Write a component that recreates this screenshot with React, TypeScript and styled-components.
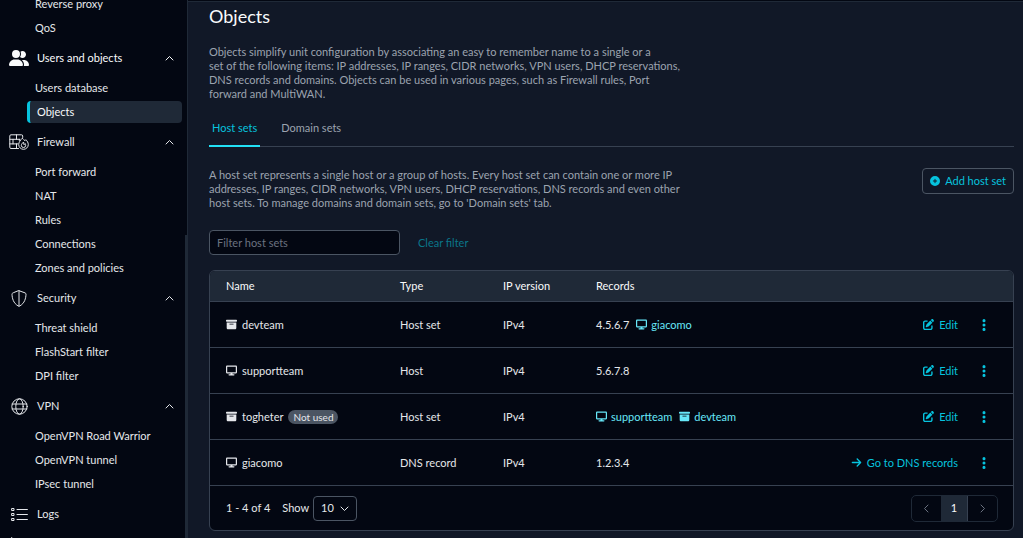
import React from "react";
import styled, { createGlobalStyle } from "styled-components";
import {
  FaArrowRight,
  FaBoxArchive,
  FaCirclePlus,
  FaDisplay,
  FaEllipsisVertical,
  FaPenToSquare,
  FaUserGroup,
} from "react-icons/fa6";

const c = {
  black: "#030712",
  page: "#111827",
  raised: "#1f2937",
  line: "#374151",
  lineStrong: "#4b5563",
  muted: "#9ca3af",
  text: "#e5e7eb",
  bright: "#f9fafb",
  accent: "#06c3de",
  accentLight: "#67e8f9",
  accentDim: "#0a768a",
};

const GlobalStyle = createGlobalStyle`
  *, *::before, *::after { box-sizing: border-box; }
  body {
    margin: 0;
    background: ${c.page};
    color: ${c.text};
    font: 11px/14px Lato, "Open Sans", sans-serif;
    -webkit-font-smoothing: antialiased;
  }
  h1, p, ul { margin: 0; padding: 0; }
  ul { list-style: none; }
  a { color: inherit; text-decoration: none; }
  button, input, select { font: inherit; color: inherit; margin: 0; }
  button { background: none; border: 0; padding: 0; cursor: pointer; }
  svg { display: block; flex: none; }
`;

const Shell = styled.div`
  display: grid;
  grid-template-columns: 188px minmax(0, 1fr);
  height: 100vh;
  overflow: hidden;
`;

const Sidebar = styled.nav`
  display: flex;
  justify-content: space-between;
  background: ${c.black};
  border-right: 1px solid ${c.raised};
  overflow: hidden;
`;

const MenuList = styled.ul`
  flex: 1;
  margin-top: -8px;
  padding-right: 3px;
`;

const ScrollThumb = styled.div`
  width: 2px;
  margin-top: 235px;
  background: ${c.raised};
`;

const GroupToggle = styled.button<{ $open?: boolean }>`
  display: grid;
  grid-template-columns: 20px 1fr 9px;
  align-items: center;
  gap: 8px;
  width: 100%;
  height: 36px;
  padding: 0 8px 0 9px;
  text-align: left;
  color: ${(p) => (p.$open ? c.bright : c.text)};
`;

const IconSlot = styled.span`
  display: flex;
  justify-content: center;
`;

const SubItem = styled.li`
  padding: 1px 0 1px 27px;
`;

const SubLink = styled.a<{ $active?: boolean }>`
  display: flex;
  align-items: center;
  height: 22px;
  padding-left: ${(p) => (p.$active ? 7 : 5)}px;
  border-left: 3px solid ${(p) => (p.$active ? c.accent : "transparent")};
  border-radius: 4px;
  background: ${(p) => (p.$active ? c.raised : "transparent")};
  color: ${(p) => (p.$active ? c.bright : c.text)};
`;

const Main = styled.main`
  border-top: 1px solid ${c.black};
  overflow: hidden;
`;

const Content = styled.div`
  border-top: 1px solid ${c.raised};
  padding: 1px 9px 7px 21px;
`;

const Title = styled.h1`
  font-size: 18px;
  line-height: 26px;
  font-weight: 400;
  color: ${c.bright};
`;

const Paragraph = styled.p`
  color: ${c.muted};
  white-space: nowrap;
`;

const Intro = styled(Paragraph)`
  margin-top: 16px;
`;

const Tabs = styled.div`
  display: flex;
  gap: 18px;
  margin-top: 19px;
  box-shadow: inset 0 -1px ${c.line};
`;

const Tab = styled.button<{ $active?: boolean }>`
  padding: 0 3px 9px;
  line-height: 16px;
  color: ${(p) => (p.$active ? c.accent : c.muted)};
  border-bottom: 2px solid ${(p) => (p.$active ? "#22e0f5" : "transparent")};
`;

const SectionHead = styled.div`
  display: flex;
  justify-content: space-between;
  align-items: flex-start;
  margin-top: 21px;
`;

const AddButton = styled.button`
  display: flex;
  align-items: center;
  gap: 5px;
  height: 26px;
  padding: 0 7px;
  border: 1px solid ${c.lineStrong};
  border-radius: 4px;
  color: ${c.accent};
`;

const FilterBar = styled.div`
  display: flex;
  align-items: center;
  gap: 18px;
  margin-top: 20px;
`;

const FilterInput = styled.input`
  width: 191px;
  height: 25px;
  padding: 0 7px;
  border: 1px solid ${c.lineStrong};
  border-radius: 4px;
  background: ${c.black};
  &::placeholder { color: #6b7280; opacity: 1; }
`;

const ClearButton = styled.button`
  color: ${c.accentDim};
`;

const Card = styled.section`
  margin-top: 15px;
  border: 1px solid ${c.line};
  border-radius: 6px;
  background: ${c.black};
  overflow: hidden;
`;

const Table = styled.table`
  width: 100%;
  table-layout: fixed;
  border-spacing: 0;
`;

const HeadCell = styled.th<{ $width?: number }>`
  width: ${(p) => (p.$width ? `${p.$width}px` : "auto")};
  height: 31px;
  padding: 0 0 0 16px;
  background: ${c.raised};
  border-bottom: 1px solid ${c.line};
  color: ${c.bright};
  font-weight: 400;
  text-align: left;
`;

const Cell = styled.td`
  height: 46px;
  padding: 0 0 0 16px;
  border-bottom: 1px solid ${c.line};
`;

const Inline = styled.div<{ $gap: number; $end?: boolean }>`
  display: flex;
  align-items: center;
  justify-content: ${(p) => (p.$end ? "flex-end" : "flex-start")};
  gap: ${(p) => p.$gap}px;
`;

const Badge = styled.span`
  padding: 0 5px;
  border-radius: 7px;
  background: ${c.lineStrong};
  color: ${c.text};
  font-size: 10px;
`;

const RecordLink = styled.a`
  display: flex;
  align-items: center;
  gap: 4px;
  color: ${c.accentLight};
`;

const ActionButton = styled.button`
  display: flex;
  align-items: center;
  gap: 5px;
  color: ${c.accent};
`;

const MoreButton = styled.button`
  display: flex;
  justify-content: center;
  width: 20px;
  margin-right: 19px;
  color: ${c.accent};
`;

const Footer = styled.div`
  display: flex;
  align-items: center;
  justify-content: space-between;
  height: 44px;
  padding: 0 15px 0 16px;
`;

const SizeLabel = styled.label`
  display: flex;
  align-items: center;
  gap: 4px;
`;

const SelectBox = styled.span`
  display: grid;
  align-items: center;
  & > * { grid-area: 1 / 1; }
  & > svg { justify-self: end; margin-right: 8px; pointer-events: none; }
`;

const SizeSelect = styled.select`
  appearance: none;
  width: 44px;
  height: 25px;
  padding: 0 7px;
  border: 1px solid ${c.lineStrong};
  border-radius: 4px;
  background: ${c.black};
`;

const Pager = styled.nav`
  display: flex;
  height: 27px;
  border: 1px solid ${c.raised};
  border-radius: 5px;
  overflow: hidden;
`;

const PageButton = styled.button<{ $current?: boolean }>`
  display: flex;
  align-items: center;
  justify-content: center;
  width: ${(p) => (p.$current ? 27 : 29)}px;
  background: ${(p) => (p.$current ? c.raised : "transparent")};
  border-right: ${(p) => (p.$current ? `1px solid ${c.line}` : "0")};
  color: ${(p) => (p.$current ? c.bright : "#6b7280")};
`;

type ChevronDir = "up" | "down" | "left" | "right";
const chevronPath: Record<ChevronDir, string> = {
  up: "M1 6l3.5-3.5L8 6",
  down: "M1 3l3.5 3.5L8 3",
  left: "M6 1L2.5 4.5 6 8",
  right: "M3 1l3.5 3.5L3 8",
};

const Chevron = ({ dir }: { dir: ChevronDir }) => (
  <svg width="9" height="9" viewBox="0 0 9 9" fill="none" stroke="currentColor" strokeWidth="1" strokeLinecap="round" strokeLinejoin="round" aria-hidden>
    <path d={chevronPath[dir]} />
  </svg>
);

const line = {
  fill: "none",
  stroke: "currentColor",
  strokeLinecap: "round" as const,
  strokeLinejoin: "round" as const,
  "aria-hidden": true,
};

const FirewallIcon = () => (
  <svg width="20" height="16" viewBox="0 0 20 16" strokeWidth="1" {...line}>
    <path d="M9.500 14.500H2a1.200 1.200 0 0 1-1.200-1.200V2A1.200 1.200 0 0 1 2 .8h10.500a1.200 1.200 0 0 1 1.200 1.200v1.200M.8 5.300h10M.8 9.900h8M7.500.8v4.500M4 5.300v4.600M10.300 5.300v1.200M7.500 9.900v4.600" />
    <path d="M13.400 4.200c1.100.9 1.800 1.700 2.400 2.600.3-.4.600-.8 1-1.100 1.400 1.300 2.500 3 2.500 4.800a4.800 4.800 0 0 1-9.600 0c0-2.100 1.600-4.400 3.700-6.300z" />
    <path d="M14.300 8.300c-1 1-2 2-2 3a2.200 2.200 0 0 0 4.400 0c0-.6-.2-1.200-.5-1.700l-.9.900z" />
  </svg>
);

const ShieldIcon = () => (
  <svg width="16" height="17" viewBox="0 0 16 17" strokeWidth="1" {...line}>
    <path d="M8 .7l6.100 2.200c.6.200.9.800.9 1.300-.1 3.900-1.300 9.100-6.300 11.800-.4.200-.9.200-1.400 0C2.300 13.300 1.100 8.100 1 4.200c0-.500.3-1.100.9-1.300zM8 .7v15.400" />
  </svg>
);

const GlobeIcon = () => (
  <svg width="17" height="17" viewBox="0 0 17 17" strokeWidth="1" {...line}>
    <circle cx="8.500" cy="8.500" r="7.700" />
    <ellipse cx="8.500" cy="8.500" rx="3.700" ry="7.700" />
    <path d="M1.200 6h14.600M1.200 11h14.600" />
  </svg>
);

const LogsIcon = () => (
  <svg width="17" height="15" viewBox="0 0 17 15" strokeWidth="1" {...line}>
    <path d="M1 1.500h2v2H1zM1 6.500h2v2H1zM1 11.500h2v2H1zM6 2.500h10.400M6 7.500h10.400M6 12.500h10.400" />
  </svg>
);

const ChartIcon = () => (
  <svg width="17" height="26" viewBox="0 0 17 26" strokeWidth="1" {...line}>
    <path d="M.7.500v19a2 2 0 0 0 2 2h13.600M4 14l4-4 3 3 5-5" />
  </svg>
);

type Group = { label: string; icon: React.ReactNode; items?: string[] };

const groups: Group[] = [
  { label: "Users and objects", icon: <FaUserGroup size={20} />, items: ["Users database", "Objects"] },
  { label: "Firewall", icon: <FirewallIcon />, items: ["Port forward", "NAT", "Rules", "Connections", "Zones and policies"] },
  { label: "Security", icon: <ShieldIcon />, items: ["Threat shield", "FlashStart filter", "DPI filter"] },
  { label: "VPN", icon: <GlobeIcon />, items: ["OpenVPN Road Warrior", "OpenVPN tunnel", "IPsec tunnel"] },
  { label: "Logs", icon: <LogsIcon /> },
];

const MenuItem = ({ label }: { label: string }) => (
  <SubItem>
    <SubLink href="#" $active={label === "Objects"} aria-current={label === "Objects" ? "page" : undefined}>
      {label}
    </SubLink>
  </SubItem>
);

type Kind = "set" | "host";
const KindIcon = ({ kind }: { kind: Kind }) => (kind === "set" ? <FaBoxArchive size={11} /> : <FaDisplay size={11} />);

type Row = {
  name: string;
  kind: Kind;
  type: string;
  unused?: boolean;
  address?: string;
  links?: { kind: Kind; name: string }[];
  dns?: boolean;
};

const rows: Row[] = [
  { name: "devteam", kind: "set", type: "Host set", address: "4.5.6.7", links: [{ kind: "host", name: "giacomo" }] },
  { name: "supportteam", kind: "host", type: "Host", address: "5.6.7.8" },
  {
    name: "togheter",
    kind: "set",
    type: "Host set",
    unused: true,
    links: [
      { kind: "host", name: "supportteam" },
      { kind: "set", name: "devteam" },
    ],
  },
  { name: "giacomo", kind: "host", type: "DNS record", address: "1.2.3.4", dns: true },
];

const ObjectRow = ({ row }: { row: Row }) => (
  <tr>
    <Cell>
      <Inline $gap={5}>
        <KindIcon kind={row.kind} />
        {row.name}
        {row.unused && <Badge>Not used</Badge>}
      </Inline>
    </Cell>
    <Cell>{row.type}</Cell>
    <Cell>IPv4</Cell>
    <Cell>
      <Inline $gap={7}>
        {row.address}
        {row.links?.map((l) => (
          <RecordLink href="#" key={l.name}>
            <KindIcon kind={l.kind} />
            {l.name}
          </RecordLink>
        ))}
      </Inline>
    </Cell>
    <Cell>
      <Inline $gap={16} $end>
        <ActionButton>
          {row.dns ? <FaArrowRight size={11} /> : <FaPenToSquare size={11} />}
          {row.dns ? "Go to DNS records" : "Edit"}
        </ActionButton>
        <MoreButton aria-label={`More actions for ${row.name}`}>
          <FaEllipsisVertical size={14} />
        </MoreButton>
      </Inline>
    </Cell>
  </tr>
);

export default function App() {
  return (
    <>
      <GlobalStyle />
      <Shell>
        <Sidebar aria-label="Main menu">
          <MenuList>
            <MenuItem label="Reverse proxy" />
            <MenuItem label="QoS" />
            {groups.map((g) => (
              <li key={g.label}>
                <GroupToggle $open={g.label === "Users and objects"}>
                  <IconSlot>{g.icon}</IconSlot>
                  {g.label}
                  {g.items && <Chevron dir="up" />}
                </GroupToggle>
                {g.items && (
                  <ul>
                    {g.items.map((i) => (
                      <MenuItem label={i} key={i} />
                    ))}
                  </ul>
                )}
              </li>
            ))}
            <li>
              <GroupToggle aria-label="Monitoring">
                <IconSlot>
                  <ChartIcon />
                </IconSlot>
              </GroupToggle>
            </li>
          </MenuList>
          <ScrollThumb />
        </Sidebar>
        <Main>
          <Content>
            <Title>Objects</Title>
            <Intro>
              Objects simplify unit configuration by associating an easy to remember name to a single or a
              <br />
              set of the following items: IP addresses, IP ranges, CIDR networks, VPN users, DHCP reservations,
              <br />
              DNS records and domains. Objects can be used in various pages, such as Firewall rules, Port
              <br />
              forward and MultiWAN.
            </Intro>
            <Tabs role="tablist">
              <Tab role="tab" aria-selected $active>
                Host sets
              </Tab>
              <Tab role="tab" aria-selected={false}>
                Domain sets
              </Tab>
            </Tabs>
            <SectionHead>
              <Paragraph>
                A host set represents a single host or a group of hosts. Every host set can contain one or more IP
                <br />
                addresses, IP ranges, CIDR networks, VPN users, DHCP reservations, DNS records and even other
                <br />
                host sets. To manage domains and domain sets, go to 'Domain sets' tab.
              </Paragraph>
              <AddButton>
                <FaCirclePlus size={10} />
                Add host set
              </AddButton>
            </SectionHead>
            <FilterBar>
              <FilterInput type="text" placeholder="Filter host sets" aria-label="Filter host sets" />
              <ClearButton>Clear filter</ClearButton>
            </FilterBar>
            <Card>
              <Table>
                <thead>
                  <tr>
                    <HeadCell $width={174}>Name</HeadCell>
                    <HeadCell $width={103}>Type</HeadCell>
                    <HeadCell $width={93}>IP version</HeadCell>
                    <HeadCell>Records</HeadCell>
                    <HeadCell aria-label="Actions" />
                  </tr>
                </thead>
                <tbody>
                  {rows.map((r) => (
                    <ObjectRow row={r} key={r.name} />
                  ))}
                </tbody>
              </Table>
              <Footer>
                <Inline $gap={12}>
                  <span>1 - 4 of 4</span>
                  <SizeLabel>
                    Show
                    <SelectBox>
                      <SizeSelect defaultValue="10">
                        <option>10</option>
                        <option>25</option>
                        <option>50</option>
                      </SizeSelect>
                      <Chevron dir="down" />
                    </SelectBox>
                  </SizeLabel>
                </Inline>
                <Pager aria-label="Pagination">
                  <PageButton aria-label="Previous page">
                    <Chevron dir="left" />
                  </PageButton>
                  <PageButton $current aria-current="page">
                    1
                  </PageButton>
                  <PageButton aria-label="Next page">
                    <Chevron dir="right" />
                  </PageButton>
                </Pager>
              </Footer>
            </Card>
          </Content>
        </Main>
      </Shell>
    </>
  );
}
